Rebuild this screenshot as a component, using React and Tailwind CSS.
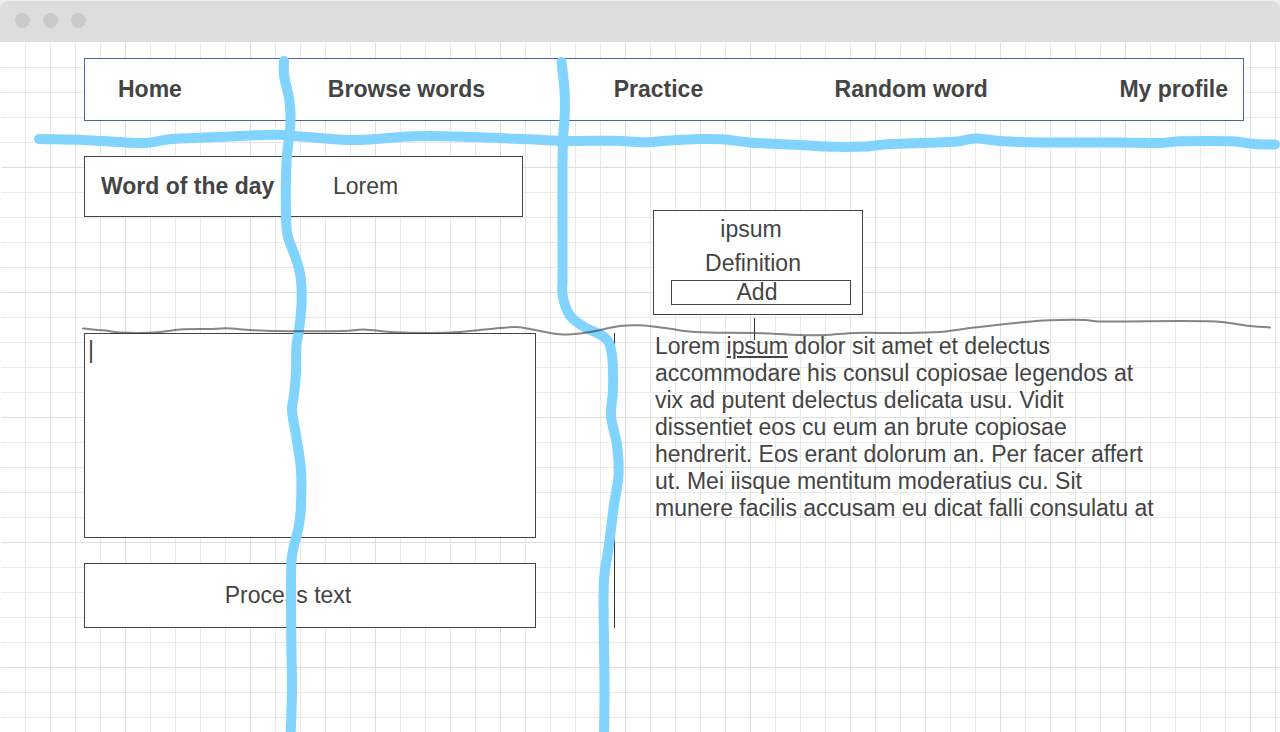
const NAV = ["Home", "Browse words", "Practice", "Random word", "My profile"];

const MARKER_LINES = [
  [[39, 139], [83, 140], [130, 142.7], [148, 142.7], [172, 139], [230, 136.5], [275, 134.7], [300, 136.5], [320, 138], [345, 140], [370, 139.5], [400, 137], [430, 136], [470, 137], [535, 139.5], [565, 141], [615, 140.7], [645, 142.3], [670, 140.5], [700, 139], [722, 139.3], [750, 142.5], [800, 145], [835, 146.8], [865, 146.5], [890, 144], [930, 142.7], [957, 141.5], [975, 138.5], [1000, 141], [1040, 142.5], [1120, 142.5], [1160, 143], [1180, 141.3], [1232, 141.3], [1255, 144], [1275, 144.5]],
  [[284, 61], [284, 75], [289, 98], [290.5, 115], [290, 130], [287, 155], [285.8, 185], [286.3, 225], [288, 237], [297, 262], [301, 280], [301.5, 305], [299, 330], [296.5, 345], [296, 372], [294, 395], [292, 410], [296, 435], [301, 470], [301, 505], [299, 525], [293.5, 548], [291.3, 563], [291.3, 640], [292, 690], [290.5, 740]],
  [[561.5, 62], [564.5, 90], [564.7, 115], [563, 140], [562.5, 170], [562.5, 283], [562.3, 293], [566, 308], [572, 318], [586, 328], [602, 335.5], [609, 343], [612.5, 360], [613, 390], [611, 416], [617, 445], [618.5, 475], [614, 505], [609, 545], [604, 580], [604, 640], [604.5, 690], [604, 740]],
];

const PENCIL_LINE = [[83, 328.5], [105, 330.5], [120, 332.5], [155, 332.5], [180, 329.5], [210, 329], [226, 328.3], [250, 330], [275, 331], [345, 331], [364, 329.5], [390, 332], [430, 333], [460, 332], [490, 329], [515, 327], [530, 329], [550, 333], [568, 334.5], [590, 332], [620, 326], [640, 325.3], [665, 328], [695, 332], [755, 333], [800, 335], [825, 335], [855, 333], [900, 333], [940, 332], [970, 328], [1020, 322.5], [1050, 320.3], [1085, 320], [1098, 321.5], [1215, 321.5], [1250, 326], [1270, 327.5]];

// Smooth curve through the points; handles are a third of each segment long
// so that long and short segments can meet without overshooting.
function smoothPath(points) {
  const tangents = points.map((_, i) => {
    const a = points[Math.max(0, i - 1)];
    const b = points[Math.min(points.length - 1, i + 1)];
    const length = Math.hypot(b[0] - a[0], b[1] - a[1]);
    return [(b[0] - a[0]) / length, (b[1] - a[1]) / length];
  });
  let d = `M${points[0][0]} ${points[0][1]}`;
  for (let i = 1; i < points.length; i++) {
    const [x0, y0] = points[i - 1];
    const [x1, y1] = points[i];
    const h = Math.hypot(x1 - x0, y1 - y0) / 3;
    const [t0, t1] = [tangents[i - 1], tangents[i]];
    d += ` C${x0 + t0[0] * h} ${y0 + t0[1] * h} ${x1 - t1[0] * h} ${y1 - t1[1] * h} ${x1} ${y1}`;
  }
  return d;
}

function WindowBar() {
  return (
    <header className="bg-[#eeeeee]">
      <div className="mt-px flex h-[41px] items-center gap-[13px] rounded-t-lg bg-[#dddddd] pb-[2px] pl-[15px]">
        <span className="size-[15px] rounded-full bg-[#c9c9c9]" />
        <span className="size-[15px] rounded-full bg-[#c9c9c9]" />
        <span className="size-[15px] rounded-full bg-[#c9c9c9]" />
      </div>
    </header>
  );
}

function DefinitionPopup() {
  return (
    <div className="relative ml-[39px] mt-[54px] w-[210px] border border-[#444] bg-white pb-[9px] pl-[17px] pr-[11px] pt-[5px] text-center">
      <p className="pr-5">ipsum</p>
      <p className="mt-[7px] pr-4">Definition</p>
      <button type="button" className="mt-[3px] block w-full border border-[#444] pr-2 leading-[23px]">
        Add
      </button>
      <span className="absolute left-[100px] top-[107px] h-[22px] w-px bg-[#333]" />
    </div>
  );
}

function Strokes() {
  return (
    <svg
      className="pointer-events-none absolute left-0 top-0"
      width="1280"
      height="732"
      viewBox="0 0 1280 732"
      fill="none"
      strokeLinecap="round"
      strokeLinejoin="round"
      aria-hidden="true"
    >
      {MARKER_LINES.map((points, i) => (
        <path key={i} d={smoothPath(points)} stroke="#80d4ff" strokeWidth="10" />
      ))}
      <path d={smoothPath(PENCIL_LINE)} stroke="#333" strokeOpacity="0.6" strokeWidth="2" />
    </svg>
  );
}

export default function App() {
  return (
    <div className="relative flex min-h-screen flex-col overflow-hidden bg-white font-['Liberation_Sans',Arial,sans-serif] text-[23px] leading-[27px] text-[#444]">
      <WindowBar />
      <main className="grow border-l border-t border-white bg-[linear-gradient(to_right,#dedede_1px,transparent_1px),linear-gradient(to_bottom,#dedede_1px,transparent_1px),linear-gradient(to_right,#e9e9e9_1px,transparent_1px),linear-gradient(to_bottom,#e9e9e9_1px,transparent_1px)] bg-[size:125px_125px,125px_125px,25px_25px,25px_25px] bg-origin-border pb-10 pl-[83px] pr-9 pt-[15px]">
        <nav className="grid grid-cols-[210fr_286fr_221fr_285fr_108fr] border border-[#4a64a0] bg-white py-[17px] pl-[33px] pr-[15px] font-bold">
          {NAV.map((label) => (
            <a key={label} href="#" className="whitespace-nowrap">
              {label}
            </a>
          ))}
        </nav>

        <div className="mt-[35px] grid min-h-[177px] grid-cols-[530px_1fr] items-start">
          <section className="grid w-[439px] grid-cols-[232px_1fr] border border-[#444] bg-white py-4 pl-4">
            <h1 className="font-bold">Word of the day</h1>
            <p>Lorem</p>
          </section>
          <DefinitionPopup />
        </div>

        <div className="grid grid-cols-[530px_1fr]">
          <div className="flex w-[452px] flex-col gap-[25px]">
            <textarea
              aria-label="Text to process"
              defaultValue="|"
              className="block h-[205px] w-full resize-none border border-[#444] bg-white px-[3px] py-[3px] outline-none"
            />
            <button type="button" className="border border-[#444] bg-white py-[18px] pr-11">
              Process text
            </button>
          </div>
          <p className="border-l border-[#333] pl-10">
            Lorem <u className="decoration-2 underline-offset-2">ipsum</u> dolor sit amet et delectus
            <br />
            accommodare his consul copiosae legendos at
            <br />
            vix ad putent delectus delicata usu. Vidit
            <br />
            dissentiet eos cu eum an brute copiosae
            <br />
            hendrerit. Eos erant dolorum an. Per facer affert
            <br />
            ut. Mei iisque mentitum moderatius cu. Sit
            <br />
            munere facilis accusam eu dicat falli consulatu at
          </p>
        </div>
      </main>
      <Strokes />
    </div>
  );
}
